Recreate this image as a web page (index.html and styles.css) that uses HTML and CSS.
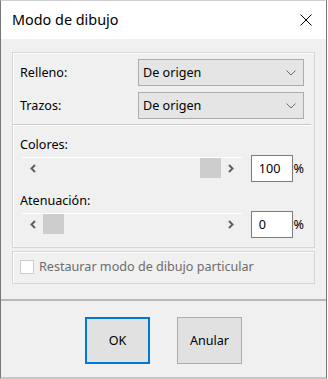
FILE: index.html
```html
<!DOCTYPE html>
<html lang="es">
<head>
<meta charset="utf-8">
<title>Modo de dibujo</title>
<link rel="stylesheet" href="styles.css">
</head>
<body>
<div class="window">
  <div class="titlebar">
    <span class="title">Modo de dibujo</span>
    <svg class="close" width="12" height="12" viewBox="0 0 12 12"><path d="M0.5 0.5 L11.5 11.5 M11.5 0.5 L0.5 11.5" stroke="#000" stroke-width="1" fill="none"/></svg>
  </div>
  <div class="content">
    <div class="group group-main">
      <div class="field">
        <span class="label">Relleno:</span>
        <div class="select"><span>De origen</span><svg class="chev" width="10" height="6" viewBox="0 0 10 6"><path d="M0.5 0.5 L5 5 L9.5 0.5" stroke="#6a6a6a" stroke-width="1" fill="none"/></svg></div>
      </div>
      <div class="field field-second">
        <span class="label">Trazos:</span>
        <div class="select"><span>De origen</span><svg class="chev" width="10" height="6" viewBox="0 0 10 6"><path d="M0.5 0.5 L5 5 L9.5 0.5" stroke="#6a6a6a" stroke-width="1" fill="none"/></svg></div>
      </div>
      <div class="sep"></div>
      <div class="slider-label">Colores:</div>
      <div class="slider-row">
        <div class="scrollbar">
          <div class="sb-btn"><svg width="8" height="9" viewBox="0 0 8 9"><path d="M6 1 L2.5 4.5 L6 8" stroke="#606060" stroke-width="2" fill="none"/></svg></div>
          <div class="sb-track at-end"><div class="sb-thumb"></div></div>
          <div class="sb-btn"><svg width="8" height="9" viewBox="0 0 8 9"><path d="M2 1 L5.5 4.5 L2 8" stroke="#606060" stroke-width="2" fill="none"/></svg></div>
        </div>
        <div class="num">100</div>
        <span class="pct">%</span>
      </div>
      <div class="slider-label slider-label-second">Atenuación:</div>
      <div class="slider-row">
        <div class="scrollbar">
          <div class="sb-btn"><svg width="8" height="9" viewBox="0 0 8 9"><path d="M6 1 L2.5 4.5 L6 8" stroke="#606060" stroke-width="2" fill="none"/></svg></div>
          <div class="sb-track at-start"><div class="sb-thumb"></div></div>
          <div class="sb-btn"><svg width="8" height="9" viewBox="0 0 8 9"><path d="M2 1 L5.5 4.5 L2 8" stroke="#606060" stroke-width="2" fill="none"/></svg></div>
        </div>
        <div class="num">0</div>
        <span class="pct">%</span>
      </div>
    </div>
    <div class="group group-check">
      <span class="checkbox"></span>
      <span class="check-label">Restaurar modo de dibujo particular</span>
    </div>
  </div>
  <div class="footer">
    <button class="btn btn-default">OK</button>
    <button class="btn">Anular</button>
  </div>
</div>
</body>
</html>
```
FILE: styles.css
```css
* { box-sizing: border-box; }
html, body { margin: 0; padding: 0; background: #ffffff; }
body {
  font-family: "Noto Sans", "Open Sans", sans-serif;
  font-size: 12.6px;
  color: #000;
}
.window {
  width: 327px;
  height: 379px;
  border-left: 1px solid #777777;
  border-right: 1px solid #777777;
  border-top: 1px solid #cfcfcf;
  border-bottom: 2px solid #c6c6c6;
  background: #f0f0f0;
  display: flex;
  flex-direction: column;
}
.titlebar {
  height: 38px;
  flex: none;
  background: #ffffff;
  display: flex;
  align-items: center;
  justify-content: space-between;
  padding: 0 14px 0 11px;
}
.title {
  font-size: 14.4px;
  line-height: 20px;
  color: #000;
}
.close { display: block; }
.content {
  height: 260px;
  flex: none;
  padding: 13px 11px 0 11px;
}
.group {
  border: 1px solid #d5d5d5;
  box-shadow: inset 1px 1px 0 #ffffff;
}
.group-main {
  height: 196px;
  padding: 6px 10px 9px 7px;
}
.field {
  display: flex;
  align-items: center;
  height: 27px;
}
.field-second { margin-top: 6px; }
.label {
  width: 118px;
  flex: none;
  line-height: 16px;
}
.select {
  flex: 1;
  height: 27px;
  border: 1px solid #adadad;
  background: #e5e5e5;
  display: flex;
  align-items: center;
  justify-content: space-between;
  padding: 0 7px 0 4px;
  line-height: 16px;
}
.chev { display: block; }
.sep {
  margin: 5px -7px 0 -7px;
  height: 2px;
  border-top: 1px solid #c9c9c9;
  border-bottom: 1px solid #ffffff;
}
.slider-label {
  margin-top: 11px;
  line-height: 16px;
  height: 16px;
}
.slider-label-second { margin-top: 11px; }
.slider-row {
  margin-top: 2px;
  height: 27px;
  display: flex;
  align-items: flex-start;
}
.scrollbar {
  margin-left: 2px;
  margin-top: 2px;
  width: 221px;
  height: 21px;
  border-top: 1px solid #ffffff;
  display: flex;
}
.sb-btn {
  width: 21px;
  height: 20px;
  flex: none;
  display: flex;
  align-items: center;
  justify-content: center;
}
.sb-btn svg { display: block; }
.sb-track {
  flex: 1;
  display: flex;
}
.at-end { justify-content: flex-end; }
.at-start { justify-content: flex-start; }
.sb-thumb {
  width: 21px;
  height: 20px;
  background: #cdcdcd;
}
.num {
  margin-left: 9px;
  width: 42px;
  height: 27px;
  border: 1px solid #7a7a7a;
  background: #ffffff;
  padding-left: 7px;
  line-height: 25px;
}
.pct {
  margin-left: 1px;
  line-height: 27px;
}
.group-check {
  margin-top: 3px;
  height: 33px;
  padding: 0 0 1px 7px;
  display: flex;
  align-items: center;
}
.checkbox {
  width: 14px;
  height: 14px;
  flex: none;
  border: 1px solid #cccccc;
  background: #ffffff;
}
.check-label {
  margin-left: 5px;
  color: #6d6d6d;
  line-height: 16px;
}
.footer {
  flex: 1;
  border-top: 2px solid #b8b8b8;
  display: flex;
  justify-content: center;
  align-items: flex-start;
  gap: 27px;
  padding-top: 16px;
}
.btn {
  width: 65px;
  height: 47px;
  margin: 0;
  padding: 0;
  font-family: "Noto Sans", "Open Sans", sans-serif;
  font-size: 12.6px;
  color: #000;
  background: #e1e1e1;
  border: 1px solid #adadad;
}
.btn-default {
  border: 2px solid #0078d7;
}
```
